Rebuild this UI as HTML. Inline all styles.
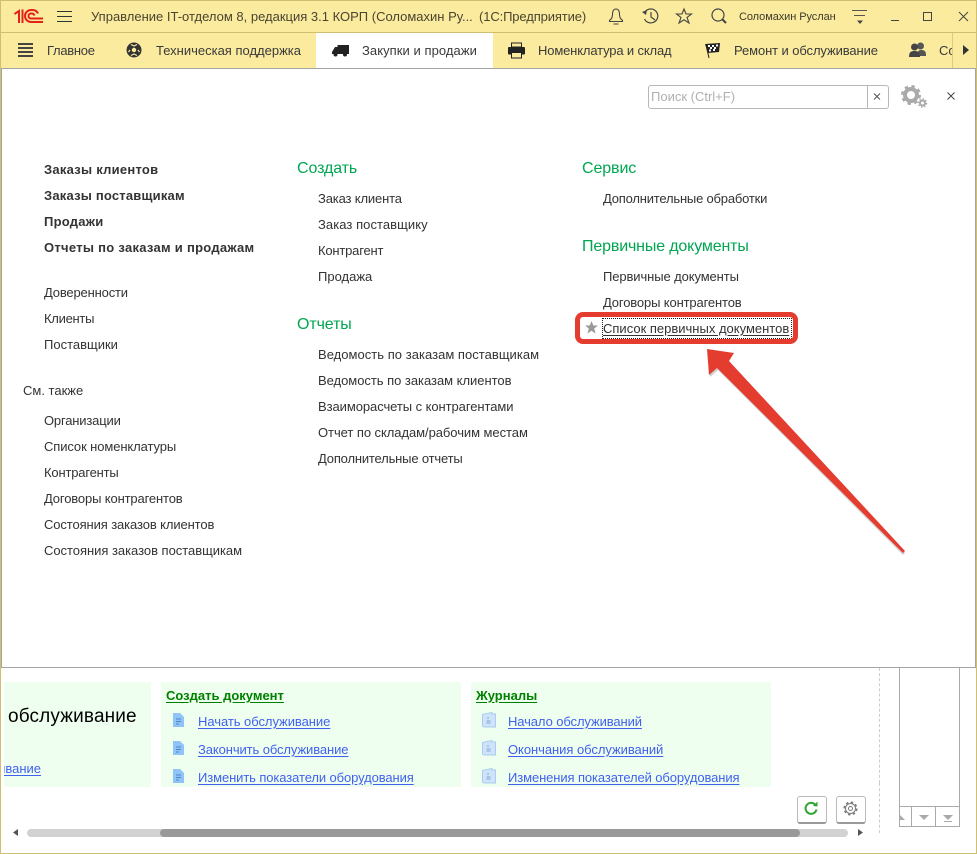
<!DOCTYPE html>
<html lang="ru"><head><meta charset="utf-8"><title>1C</title>
<style>
html,body{margin:0;padding:0}
body{width:977px;height:854px;position:relative;overflow:hidden;background:#fff;font-family:"Liberation Sans",sans-serif;font-size:13px;color:#333}
.t{position:absolute;white-space:nowrap;line-height:16px;letter-spacing:0}
.a{position:absolute}
.g{color:#00a651;font-size:16px;line-height:20px;letter-spacing:-.1px}
.b{font-weight:bold;color:#333;letter-spacing:.25px}
.l{color:#4060f0;text-decoration:underline;text-underline-offset:2px}
.h{color:#008000;font-weight:bold;text-decoration:underline;text-underline-offset:2px;letter-spacing:0}
.green{position:absolute;background:#efffef;top:682px;height:105px}
svg{position:absolute;overflow:visible}
</style></head><body>
<div class="a" style="left:0;top:0;width:977px;height:32px;background:#fbeb9e"></div>
<div class="a" style="left:0;top:32px;width:977px;height:36px;background:#fbeb9e;border-top:1px solid #cfbf70;box-sizing:border-box"></div>
<div class="a" style="left:316px;top:33px;width:177px;height:35px;background:#fff"></div>
<div class="a" style="left:0;top:0;width:975px;height:852px;border:1px solid #cfbf70"></div>

<svg style="left:14px;top:9px" width="29" height="14" viewBox="0 0 29 14"><g fill="none" stroke="#e2231a" stroke-width="2"><path d="M.5 5L5 2V14"/><path d="M8.500 .5V14"/><path d="M29 13H17A6 6 0 0 1 17 1H18.500A6 6 0 0 1 24 4.500"/><path d="M29 9.500H17A2.500 2.500 0 0 1 17 4.500H18A3 3 0 0 1 20.500 6.500"/></g></svg>
<svg style="left:57px;top:11px" width="15" height="11"><path d="M0 .5H15M0 5.500H15M0 10.500H15" stroke="#333" stroke-width="1"/></svg>
<div class="t" style="left:91px;top:9px;color:#4a4430">Управление IT-отделом 8, редакция 3.1 КОРП (Соломахин Ру...</div>
<div class="t" style="left:479px;top:9px;color:#4a4430;letter-spacing:-.12px">(1С:Предприятие)</div>

<svg style="left:608px;top:8px" width="16" height="17" viewBox="0 0 16 17"><path d="M8 1C5 1 4.500 4 4.500 6.500C4.500 10 3 11 1.500 12.500V13.500H14.500V12.500C13 11 11.500 10 11.500 6.500C11.500 4 11 1 8 1Z M5.500 16H10.500" fill="none" stroke="#444" stroke-width="1.100"/></svg>
<svg style="left:642px;top:8px" width="18" height="17" viewBox="0 0 18 17"><path d="M3 4A7 7 0 1 1 2.500 11M9 4V9L13 12" fill="none" stroke="#444" stroke-width="1.200"/><path d="M0 4L5 2L4 7Z" fill="#444"/></svg>
<svg style="left:676px;top:8px" width="16" height="16" viewBox="0 0 16 16"><path d="M8 1L10 6H15.500L11 9.500L13 15L8 11.800L3 15L5 9.500L.5 6H6Z" fill="none" stroke="#444" stroke-width="1.100"/></svg>
<svg style="left:711px;top:8px" width="16" height="16" viewBox="0 0 16 16"><circle cx="7" cy="7" r="6" fill="none" stroke="#444" stroke-width="1.200"/><path d="M11 11L15 15" stroke="#444" stroke-width="2"/></svg>
<div class="t" style="left:739px;top:9px;font-size:11px;color:#3d3a2c;letter-spacing:-.07px">Соломахин Руслан</div>
<svg style="left:852px;top:10px" width="15" height="15"><path d="M0 .5H15M2 5.500H13" stroke="#555" stroke-width="1"/><path d="M5 10.500H11L8 14Z" fill="#444"/></svg>
<svg style="left:890px;top:8px" width="80" height="16"><path d="M1 12.500H9" stroke="#444" stroke-width="1"/><rect x="33.500" y="4.500" width="8" height="8" fill="none" stroke="#444"/><path d="M69 4L78 13M78 4L69 13" stroke="#444"/></svg>

<svg style="left:18px;top:43px" width="15" height="14"><path d="M0 1H15M0 5H15M0 9H15M0 13H15" stroke="#444" stroke-width="2"/></svg>
<div class="t" style="left:47px;top:43px;color:#3a3a3a;letter-spacing:-.28px">Главное</div>
<svg style="left:126px;top:42px" width="16" height="16" viewBox="0 0 16 16"><circle cx="8" cy="8" r="7.500" fill="#333"/><circle cx="8" cy="8" r="2.200" fill="#fbeb9e"/><path d="M5 2.500L8 4L11 2.500M2.500 10L4 8M13.500 10L12 8M5 13.500L8 12L11 13.500" stroke="#fbeb9e" stroke-width="1.200" fill="none"/></svg>
<div class="t" style="left:156px;top:43px;color:#3a3a3a">Техническая поддержка</div>
<svg style="left:332px;top:44px" width="17" height="13" viewBox="0 0 17 13"><path d="M0 8L3 3H5.500V1H17V10H0Z" fill="#222"/><circle cx="3.500" cy="10.500" r="2" fill="#222"/><circle cx="13" cy="10.500" r="2" fill="#222"/></svg>
<div class="t" style="left:362px;top:43px;color:#3a3a3a;letter-spacing:.06px">Закупки и продажи</div>
<svg style="left:508px;top:42px" width="17" height="17" viewBox="0 0 17 17"><path d="M3.500 1H13.500V5H3.500Z" fill="#fbeb9e" stroke="#222"/><rect x="0" y="5" width="17" height="7.500" rx="1" fill="#222"/><path d="M3.500 10.500H13.500V16H3.500Z" fill="#fbeb9e" stroke="#222"/></svg>
<div class="t" style="left:538px;top:43px;color:#3a3a3a;letter-spacing:-.15px">Номенклатура и склад</div>
<svg style="left:705px;top:42px" width="15" height="17" viewBox="0 0 15 17"><path d="M0 2L15 1L14 10L3 11Z" fill="#222"/><path d="M3 3H5V5H3ZM7 3H9V5H7ZM11 2.500H13V4.500H11ZM5 5H7V7H5ZM9 5H11V7H9ZM4 7.500H6V9.500H4ZM8 7H10V9H8Z" fill="#fff"/><path d="M1 3L4 16" stroke="#222"/></svg>
<div class="t" style="left:734px;top:43px;color:#3a3a3a;letter-spacing:-.1px">Ремонт и обслуживание</div>
<svg style="left:909px;top:42px" width="17" height="15" viewBox="0 0 17 15"><circle cx="11.500" cy="4" r="3.500" fill="#555"/><path d="M8 14C8 9 10 8 12 8C15 8 17 9 17 13V14Z" fill="#555"/><circle cx="5.500" cy="5" r="3.500" fill="#444"/><path d="M0 15C0 10 2 9 5.500 9C9 9 11 10 11 15Z" fill="#444"/></svg>
<div class="a" style="left:939px;top:33px;width:13px;height:35px;overflow:hidden"><div class="t" style="left:0;top:10px;color:#3a3a3a">Со</div></div>
<div class="a" style="left:952px;top:33px;width:1px;height:35px;background:#dccb80"></div>
<svg style="left:963px;top:45px" width="6" height="10"><path d="M0 0L6 5L0 10Z" fill="#333"/></svg>

<div class="a" style="left:1px;top:68px;width:975px;height:600px;background:#fff;border:1px solid #a5a5a5;box-sizing:border-box"></div>

<div class="a" style="left:648px;top:85px;width:218px;height:22px;border:1px solid #b8b8b8;border-radius:3px 0 0 3px;background:#fff"></div>
<div class="a" style="left:867px;top:85px;width:20px;height:22px;border:1px solid #b8b8b8;border-radius:0 3px 3px 0;background:#fff"></div>
<div class="t" style="left:651px;top:89px;color:#b0b0b0">Поиск (Ctrl+F)</div>
<svg style="left:873px;top:93px" width="8" height="7"><path d="M1 .5L7 6.500M7 .5L1 6.500" stroke="#555"/></svg>
<svg style="left:901px;top:85px" width="27" height="23" viewBox="0 0 27 23"><g fill="none" stroke="#aaa"><circle cx="10" cy="10" r="6" stroke-width="4"/><circle cx="10" cy="10" r="8.500" stroke-width="3" stroke-dasharray="3.300 3.400"/><circle cx="21.500" cy="18" r="2.500" stroke-width="2"/><circle cx="21.500" cy="18" r="4" stroke-width="1.500" stroke-dasharray="1.500 1.600"/></g></svg>
<svg style="left:947px;top:92px" width="8" height="8"><path d="M.5 .5L7.500 7.500M7.500 .5L.5 7.500" stroke="#444"/></svg>

<div class="t b" style="left:44px;top:162px">Заказы клиентов</div>
<div class="t b" style="left:44px;top:188px;letter-spacing:.2px">Заказы поставщикам</div>
<div class="t b" style="left:44px;top:214px">Продажи</div>
<div class="t b" style="left:44px;top:240px;letter-spacing:.28px">Отчеты по заказам и продажам</div>
<div class="t" style="left:44px;top:285px;letter-spacing:-.17px">Доверенности</div>
<div class="t" style="left:44px;top:311px;letter-spacing:-.28px">Клиенты</div>
<div class="t" style="left:44px;top:337px">Поставщики</div>
<div class="t" style="left:23px;top:383px">См. также</div>
<div class="t" style="left:44px;top:413px;letter-spacing:-.18px">Организации</div>
<div class="t" style="left:44px;top:439px;letter-spacing:-.1px">Список номенклатуры</div>
<div class="t" style="left:44px;top:465px;letter-spacing:-.18px">Контрагенты</div>
<div class="t" style="left:44px;top:491px;letter-spacing:-.14px">Договоры контрагентов</div>
<div class="t" style="left:44px;top:517px;letter-spacing:-.11px">Состояния заказов клиентов</div>
<div class="t" style="left:44px;top:543px;letter-spacing:-.03px">Состояния заказов поставщикам</div>

<div class="t g" style="left:297px;top:159px">Создать</div>
<div class="t" style="left:318px;top:191px;letter-spacing:-.15px">Заказ клиента</div>
<div class="t" style="left:318px;top:217px;letter-spacing:.06px">Заказ поставщику</div>
<div class="t" style="left:318px;top:243px;letter-spacing:-.2px">Контрагент</div>
<div class="t" style="left:318px;top:269px">Продажа</div>
<div class="t g" style="left:297px;top:315px">Отчеты</div>
<div class="t" style="left:318px;top:347px;letter-spacing:.03px">Ведомость по заказам поставщикам</div>
<div class="t" style="left:318px;top:373px;letter-spacing:-.03px">Ведомость по заказам клиентов</div>
<div class="t" style="left:318px;top:399px;letter-spacing:-.07px">Взаиморасчеты с контрагентами</div>
<div class="t" style="left:318px;top:425px;letter-spacing:-.06px">Отчет по складам/рабочим местам</div>
<div class="t" style="left:318px;top:451px;letter-spacing:-.18px">Дополнительные отчеты</div>

<div class="t g" style="left:582px;top:159px">Сервис</div>
<div class="t" style="left:603px;top:191px;letter-spacing:-.2px">Дополнительные обработки</div>
<div class="t g" style="left:582px;top:237px;letter-spacing:-.15px">Первичные документы</div>
<div class="t" style="left:603px;top:269px;letter-spacing:-.1px">Первичные документы</div>
<div class="t" style="left:603px;top:295px;letter-spacing:-.14px">Договоры контрагентов</div>
<svg style="left:585px;top:321px" width="13" height="13" viewBox="0 0 13 13"><path d="M6.500 0L8.300 4.500H13L9.200 7.500L10.600 12.500L6.500 9.700L2.400 12.500L3.800 7.500L0 4.500H4.700Z" fill="#999"/></svg>
<div class="a" style="left:602px;top:318px;width:188px;height:19px;border:1px dotted #222"></div>
<div class="t" style="left:603px;top:321px;color:#333;text-decoration:underline;text-underline-offset:2px">Список первичных документов</div>
<div class="a" style="left:575px;top:312px;width:223px;height:32px;border:5px solid #e53c30;border-radius:8px;box-sizing:border-box"></div>
<svg style="left:0;top:0" width="977" height="854"><path d="M708 351L710 377L718 370L903 555L905 553Z" fill="#bbb" opacity=".7"/><path d="M707 349L734 353L729 361L905 551L903 553L717 368L709 375Z" fill="#e53c30"/></svg>

<div class="green" style="left:4px;width:147px"></div>
<div class="green" style="left:161px;width:300px"></div>
<div class="green" style="left:471px;width:300px"></div>
<div class="t" style="left:8px;top:706px;font-size:19px;line-height:22px;color:#000;letter-spacing:.15px">обслуживание</div>
<div class="a l t" style="left:4px;top:761px;width:37px;overflow:hidden;direction:rtl">ивание</div>
<div class="t h" style="left:166px;top:688px">Создать документ</div>
<div class="t h" style="left:476px;top:688px">Журналы</div>
<div class="t l" style="left:198px;top:714px;letter-spacing:-.05px">Начать обслуживание</div>
<div class="t l" style="left:198px;top:742px;letter-spacing:-.1px">Закончить обслуживание</div>
<div class="t l" style="left:198px;top:770px;letter-spacing:-.1px">Изменить показатели оборудования</div>
<div class="t l" style="left:508px;top:714px;letter-spacing:-.1px">Начало обслуживаний</div>
<div class="t l" style="left:508px;top:742px;letter-spacing:-.05px">Окончания обслуживаний</div>
<div class="t l" style="left:508px;top:770px;letter-spacing:-.1px">Изменения показателей оборудования</div>

<svg style="left:173px;top:713px" width="11" height="14"><path d="M0 0H7L11 4V14H0Z" fill="#90c4f8"/><path d="M3 6H8M3 8.500H8M3 11H6" stroke="#4a88c8"/></svg>
<svg style="left:173px;top:741px" width="11" height="14"><path d="M0 0H7L11 4V14H0Z" fill="#90c4f8"/><path d="M3 6H8M3 8.500H8M3 11H6" stroke="#4a88c8"/></svg>
<svg style="left:173px;top:769px" width="11" height="14"><path d="M0 0H7L11 4V14H0Z" fill="#90c4f8"/><path d="M3 6H8M3 8.500H8M3 11H6" stroke="#4a88c8"/></svg>
<svg style="left:482px;top:712px" width="14" height="16"><path d="M.5 2.500L10 .5V2H13.500V15H2L.5 14Z" fill="#cfe4fa" stroke="#a8cdf0"/><path d="M6 5V7M4.500 9H8.500M4.500 11H8.500" stroke="#7fa8d0"/></svg>
<svg style="left:482px;top:740px" width="14" height="16"><path d="M.5 2.500L10 .5V2H13.500V15H2L.5 14Z" fill="#cfe4fa" stroke="#a8cdf0"/><path d="M6 5V7M4.500 9H8.500M4.500 11H8.500" stroke="#7fa8d0"/></svg>
<svg style="left:482px;top:768px" width="14" height="16"><path d="M.5 2.500L10 .5V2H13.500V15H2L.5 14Z" fill="#cfe4fa" stroke="#a8cdf0"/><path d="M6 5V7M4.500 9H8.500M4.500 11H8.500" stroke="#7fa8d0"/></svg>

<div class="a" style="left:797px;top:796px;width:28px;height:25px;border:1px solid #bbb;border-bottom:2px solid #999;border-radius:3px;background:#fff"></div>
<svg style="left:804px;top:801px" width="14" height="15" viewBox="0 0 14 15"><path d="M11.500 4A5.500 5.500 0 1 0 12.500 8.500" fill="none" stroke="#2fa52f" stroke-width="2"/><path d="M9 5L13.500 5.500L13.500 .5Z" fill="#2fa52f"/></svg>
<div class="a" style="left:836px;top:796px;width:28px;height:25px;border:1px solid #bbb;border-bottom:2px solid #999;border-radius:3px;background:#fff"></div>
<svg style="left:843px;top:801px" width="15" height="15" viewBox="0 0 15 15"><g fill="none" stroke="#777"><circle cx="7.500" cy="7.500" r="2"/><circle cx="7.500" cy="7.500" r="5"/><circle cx="7.500" cy="7.500" r="6.300" stroke-width="1.500" stroke-dasharray="2.500 2.450"/></g></svg>

<svg style="left:13px;top:829px" width="5" height="7"><path d="M5 0V7L0 3.500Z" fill="#555"/></svg>
<div class="a" style="left:27px;top:829px;width:821px;height:8px;background:#d2d2d2;border-radius:4px"></div>
<div class="a" style="left:160px;top:829px;width:640px;height:8px;background:#999;border-radius:4px"></div>
<svg style="left:858px;top:829px" width="5" height="7"><path d="M0 0V7L5 3.500Z" fill="#555"/></svg>
<div class="a" style="left:879px;top:668px;height:115px;border-left:1px dashed #ccc"></div>
<div class="a" style="left:879px;top:783px;height:50px;border-left:1px dashed #ccc"></div>

<div class="a" style="left:899px;top:668px;width:59px;height:138px;border-left:1px solid #aaa;border-right:1px solid #aaa"></div>
<div class="a" style="left:899px;top:806px;width:61px;height:21px;border:1px solid #aaa;box-sizing:border-box"></div>
<div class="a" style="left:911px;top:806px;width:1px;height:21px;background:#aaa"></div>
<div class="a" style="left:935px;top:806px;width:1px;height:21px;background:#aaa"></div>
<svg style="left:900px;top:815px" width="5" height="5"><path d="M0 0L5 5H0Z" fill="#aaa"/></svg>
<svg style="left:919px;top:815px" width="10" height="5"><path d="M0 0H10L5 5Z" fill="#aaa"/></svg>
<svg style="left:943px;top:815px" width="10" height="7"><path d="M0 0H10L5 5ZM1 6H9V7H1Z" fill="#aaa"/></svg>
</body></html>
